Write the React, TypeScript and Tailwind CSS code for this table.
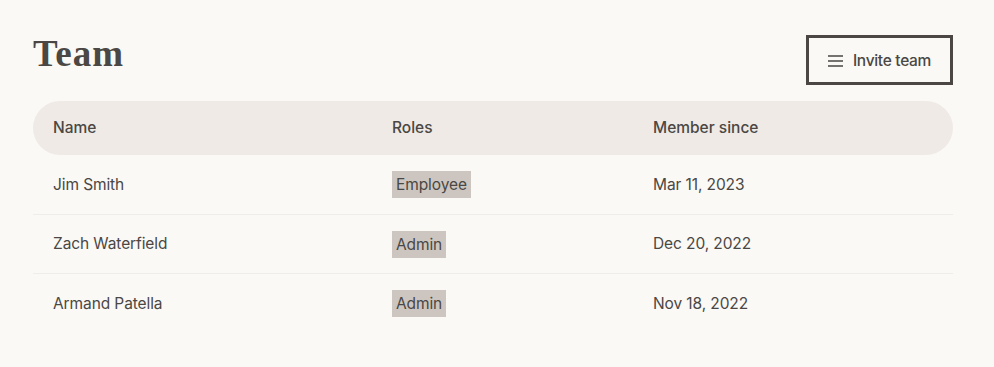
const members = [
  { name: "Jim Smith", role: "Employee", since: "Mar 11, 2023" },
  { name: "Zach Waterfield", role: "Admin", since: "Dec 20, 2022" },
  { name: "Armand Patella", role: "Admin", since: "Nov 18, 2022" },
];

function MenuIcon() {
  return (
    <svg width="15" height="12" viewBox="0 0 15 12" className="text-[#4a4744]">
      <path d="M0 1h15M0 6h15M0 11h15" stroke="currentColor" strokeWidth="1.3" fill="none" />
    </svg>
  );
}

export default function App() {
  return (
    <div className="min-h-[367px] bg-[#faf9f6] px-[33px] pt-[35px] text-[#4a4744] font-['Inter',sans-serif]">
      <div className="flex w-[920px] items-start justify-between">
        <h1 className="mt-[-1px] font-['Liberation_Serif',serif] text-[37px] font-bold leading-[40px] tracking-[1px] text-[#4a4744]">
          Team
        </h1>
        <button className="flex h-[50px] w-[147px] items-center justify-center gap-[10px] border-[3px] border-[#4a4744] pt-[1px] text-[15.5px] font-medium tracking-[-0.3px] text-[#4a4744]">
          <MenuIcon />
          Invite team
        </button>
      </div>

      <table className="mt-[16px] w-[920px] border-collapse text-left text-[15.5px]">
        <thead>
          <tr className="h-[54px] bg-[#efeae6]">
            <th className="w-[339px] rounded-l-full pl-[20px] font-medium">Name</th>
            <th className="w-[261px] pl-[20px] font-medium">Roles</th>
            <th className="rounded-r-full pl-[20px] font-medium">Member since</th>
          </tr>
        </thead>
        <tbody>
          {members.map((m, i) => (
            <tr
              key={m.name}
              className={`h-[59px] ${i < members.length - 1 ? "border-b border-[#f0ede9]" : ""}`}
            >
              <td className="pl-[20px] pt-[1px] font-normal tracking-[-0.1px]">{m.name}</td>
              <td className="pl-[20px] pt-[1px]">
                <span className="inline-block bg-[#cdc6c0] px-[4px] py-[3px] leading-[21px] tracking-[-0.1px]">
                  {m.role}
                </span>
              </td>
              <td className="pl-[20px] pt-[1px] tracking-[-0.1px]">{m.since}</td>
            </tr>
          ))}
        </tbody>
      </table>
    </div>
  );
}
